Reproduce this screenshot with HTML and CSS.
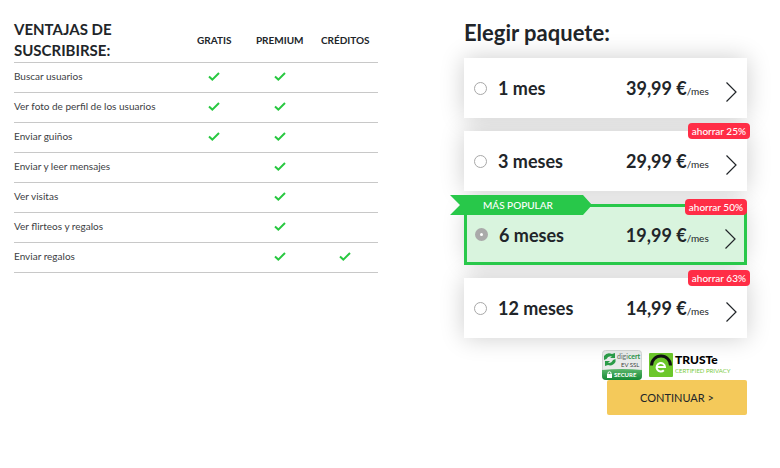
FILE: index.html
```html
<!DOCTYPE html>
<html lang="es">
<head>
    <meta charset="UTF-8">
    <meta name="viewport" content="width=device-width, initial-scale=1.0">
    <title>Elegir paquete</title>
    <link rel="stylesheet" href="styles.css">
</head>
<body>

    <svg class="symbols" aria-hidden="true">
        <symbol id="check" viewBox="0 0 12 9">
            <path d="M1 4.6L4.3 7.6L11 1" fill="none" stroke="#28c840" stroke-width="2"/>
        </symbol>
        <symbol id="arrow" viewBox="0 0 11 20">
            <path d="M0.5 0.5L10 10L0.5 19.5" fill="none" stroke="#212529" stroke-width="1.2"/>
        </symbol>
    </svg>

    <main class="page">
        <section>
            <table class="benefits">
                <thead>
                    <tr>
                        <th class="benefits-title">VENTAJAS DE SUSCRIBIRSE:</th>
                        <th>GRATIS</th>
                        <th>PREMIUM</th>
                        <th>CRÉDITOS</th>
                    </tr>
                </thead>
                <tbody>
                    <tr>
                        <td>Buscar usuarios</td>
                        <td><svg class="check" role="img" aria-label="Sí"><use href="#check"/></svg></td>
                        <td><svg class="check" role="img" aria-label="Sí"><use href="#check"/></svg></td>
                        <td></td>
                    </tr>
                    <tr>
                        <td>Ver foto de perfil de los usuarios</td>
                        <td><svg class="check" role="img" aria-label="Sí"><use href="#check"/></svg></td>
                        <td><svg class="check" role="img" aria-label="Sí"><use href="#check"/></svg></td>
                        <td></td>
                    </tr>
                    <tr>
                        <td>Enviar guiños</td>
                        <td><svg class="check" role="img" aria-label="Sí"><use href="#check"/></svg></td>
                        <td><svg class="check" role="img" aria-label="Sí"><use href="#check"/></svg></td>
                        <td></td>
                    </tr>
                    <tr>
                        <td>Enviar y leer mensajes</td>
                        <td></td>
                        <td><svg class="check" role="img" aria-label="Sí"><use href="#check"/></svg></td>
                        <td></td>
                    </tr>
                    <tr>
                        <td>Ver visitas</td>
                        <td></td>
                        <td><svg class="check" role="img" aria-label="Sí"><use href="#check"/></svg></td>
                        <td></td>
                    </tr>
                    <tr>
                        <td>Ver flirteos y regalos</td>
                        <td></td>
                        <td><svg class="check" role="img" aria-label="Sí"><use href="#check"/></svg></td>
                        <td></td>
                    </tr>
                    <tr>
                        <td>Enviar regalos</td>
                        <td></td>
                        <td><svg class="check" role="img" aria-label="Sí"><use href="#check"/></svg></td>
                        <td><svg class="check" role="img" aria-label="Sí"><use href="#check"/></svg></td>
                    </tr>
                </tbody>
            </table>
        </section>

        <form class="checkout">
            <h1>Elegir paquete:</h1>

            <div class="packages">
                <label class="package">
                    <input type="radio" name="package" value="1">
                    <span class="months">1 mes</span>
                    <span class="price">39,99 €<small>/mes</small></span>
                    <svg class="arrow"><use href="#arrow"/></svg>
                </label>
                <label class="package">
                    <span class="discount">ahorrar 25%</span>
                    <input type="radio" name="package" value="3">
                    <span class="months">3 meses</span>
                    <span class="price">29,99 €<small>/mes</small></span>
                    <svg class="arrow"><use href="#arrow"/></svg>
                </label>
                <label class="package popular">
                    <span class="ribbon">MÁS POPULAR</span>
                    <span class="discount">ahorrar 50%</span>
                    <input type="radio" name="package" value="6" checked>
                    <span class="months">6 meses</span>
                    <span class="price">19,99 €<small>/mes</small></span>
                    <svg class="arrow"><use href="#arrow"/></svg>
                </label>
                <label class="package">
                    <span class="discount">ahorrar 63%</span>
                    <input type="radio" name="package" value="12">
                    <span class="months">12 meses</span>
                    <span class="price">14,99 €<small>/mes</small></span>
                    <svg class="arrow"><use href="#arrow"/></svg>
                </label>
            </div>

            <div class="seals">
                <svg class="digicert" viewBox="0 0 40 30" role="img" aria-label="Digicert">
                    <defs>
                        <linearGradient id="sealGreen" x1="0" y1="0" x2="0" y2="1">
                            <stop offset="0" stop-color="#5cb66c"/>
                            <stop offset="1" stop-color="#158a35"/>
                        </linearGradient>
                    </defs>
                    <rect x="0.5" y="0.5" width="39" height="29" rx="3" fill="#e9ebea" stroke="#d3d6d4"/>
                    <path d="M0 20Q20 18 40 20V26Q40 30 36 30H4Q0 30 0 26Z" fill="url(#sealGreen)"/>
                    <path d="M2 10V6Q5 2 10 4L13 3V8H8L10 6.5Q6 5.5 4.5 9Z" fill="#2b9c48"/>
                    <path d="M13.5 9V12Q10.5 16.5 6 15L3 16V11H8L6 13Q9.5 13.5 11 10Z" fill="#2b9c48"/>
                    <text x="15" y="9" font-size="7" fill="#66706a">digi<tspan fill="#259344" font-weight="bold">cert</tspan></text>
                    <text x="19" y="17" font-size="6" fill="#444">EV SSL</text>
                    <rect x="5" y="24" width="5" height="4" fill="#fff"/>
                    <path d="M6 24V22.5Q7.5 21 9 22.5V24" fill="none" stroke="#fff"/>
                    <text x="12" y="27" font-size="6" font-weight="bold" fill="#fff">SECURE</text>
                </svg>
                <svg class="truste" viewBox="0 0 86 24" role="img" aria-label="TRUSTe">
                    <rect width="24" height="24" rx="1" fill="#6cc72b"/>
                    <path d="M2.5 12.5A9.5 9.5 0 0 1 21.5 12.5" fill="none" stroke="#111" stroke-width="3"/>
                    <path d="M8 14H16A4.2 4.2 0 1 0 14.8 17.2" fill="none" stroke="#fff" stroke-width="2"/>
                    <text class="truste-name" x="26" y="11" font-size="12">TRUSTe</text>
                    <text x="26" y="20" font-size="6" fill="#7ccb3f">CERTIFIED PRIVACY</text>
                </svg>
            </div>

            <button type="submit">CONTINUAR &gt;</button>
        </form>
    </main>

</body>
</html>
```
FILE: styles.css
```css
* {
    box-sizing: border-box;
}
body {
    margin: 0;
    background-color: #fff;
    color: #212529;
    font-family: Lato, "Open Sans", sans-serif;
}
.symbols {
    display: none;
}
.page {
    display: grid;
    grid-template-columns: 364fr 283fr;
    gap: 86px;
    padding: 19px 33px 20px 14px;
}

/* benefits */
.benefits {
    width: 100%;
    table-layout: fixed;
    border-collapse: collapse;
    font-size: 10px;
    line-height: 13px;
}
.benefits th, .benefits td {
    width: 18%;
    height: 30px;
    padding: 0 0 2px;
    border-bottom: 1px solid #c8c8c8;
    text-align: center;
}
.benefits th {
    padding: 0;
}
.benefits th:first-child, .benefits td:first-child {
    width: 46%;
    text-align: left;
}
.benefits td:first-child {
    color: #3c4043;
}
.benefits .benefits-title {
    height: 43px;
    padding-right: 30px;
    font-size: 15px;
    line-height: 21px;
}
.check {
    display: block;
    width: 12px;
    height: 9px;
    margin: 0 auto;
}

/* packages */
h1 {
    margin: 0 0 12px;
    font-size: 22px;
    line-height: 27px;
}
.packages {
    display: grid;
    gap: 13px;
    isolation: isolate;
}
.package {
    position: relative;
    display: grid;
    grid-template-columns: 13px 117fr 89fr 11px;
    column-gap: 11px;
    align-items: center;
    height: 60px;
    padding: 0 10px;
    background-color: #fff;
    font-size: 18px;
    font-weight: bold;
    cursor: pointer;
}
/* shadow stays below every card */
.package::before {
    content: "";
    position: absolute;
    inset: 0;
    z-index: -1;
    box-shadow: 0 0 24px rgba(0, 0, 0, 0.2);
}
.package input {
    appearance: none;
    width: 13px;
    height: 13px;
    margin: 0;
    border: 1px solid #a8a8a8;
    border-radius: 50%;
    background-color: #fff;
}
.package input:checked {
    border: 5px solid #aaa;
}
.price {
    white-space: nowrap;
}
.price small {
    font-size: 10px;
    font-weight: normal;
}
.arrow {
    width: 11px;
    height: 20px;
    margin-top: 8px;
}
.popular {
    height: 61px;
    padding: 0 8px;
    border: 3px solid #28c84a;
    background-color: #d9f4de;
}
.discount {
    position: absolute;
    top: -8px;
    right: -3px;
    padding: 0 4px;
    border-radius: 4px;
    background-color: #ff2d46;
    color: #fff;
    font-size: 10px;
    font-weight: 500;
    line-height: 16px;
}
.ribbon {
    position: absolute;
    top: -12px;
    left: -17px;
    width: 142px;
    padding-left: 33px;
    background-color: #28c84a;
    clip-path: polygon(0 0, 133px 0, 100% 50%, 133px 100%, 0 100%, 10px 50%);
    color: #fff;
    font-size: 10px;
    font-weight: 500;
    line-height: 20px;
}

/* seals and button */
.seals {
    display: flex;
    justify-content: flex-end;
    align-items: center;
    gap: 7px;
    margin-top: 12px;
    padding-right: 12px;
}
.digicert {
    width: 40px;
    height: 30px;
}
.truste {
    width: 86px;
    height: 24px;
}
.truste-name {
    font-weight: 900;
}
button {
    display: block;
    width: 140px;
    height: 35px;
    margin-left: auto;
    border: none;
    border-radius: 2px;
    background-color: #f4c95a;
    color: #212529;
    font-family: inherit;
    font-size: 11px;
    cursor: pointer;
}
```
